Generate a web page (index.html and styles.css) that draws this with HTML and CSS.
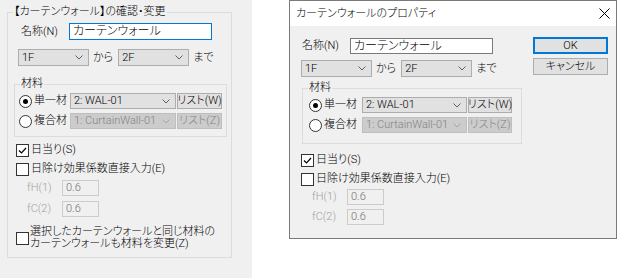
FILE: index.html
```html
<!DOCTYPE html>
<html lang="ja">
<head>
    <meta charset="UTF-8">
    <title>カーテンウォールのプロパティ</title>
    <link rel="stylesheet" href="styles.css">
</head>
<body>
    <div class="panel">
        <fieldset class="group main">
            <legend>【カーテンウォール】の確認・変更</legend>
            <div class="row name-row">
                <span class="lbl">名称(N)</span>
                <div class="edit name focus">カーテンウォール</div>
            </div>
            <div class="row floor-row">
                <div class="combo floor"><span>1F</span><svg class="arrow" width="8" height="5" viewBox="0 0 8 5"><polyline points="0.5,0.5 4,4 7.5,0.5"/></svg></div>
                <span class="word">から</span>
                <div class="combo floor"><span>2F</span><svg class="arrow" width="8" height="5" viewBox="0 0 8 5"><polyline points="0.5,0.5 4,4 7.5,0.5"/></svg></div>
                <span class="word">まで</span>
            </div>
            <fieldset class="group material">
                <legend>材料</legend>
                <div class="row mat-row">
                    <span class="opt"><span class="radio on"></span>単一材</span>
                    <div class="combo mat"><span>2: WAL-01</span><svg class="arrow" width="8" height="5" viewBox="0 0 8 5"><polyline points="0.5,0.5 4,4 7.5,0.5"/></svg></div>
                    <div class="btn list">リスト(W)</div>
                </div>
                <div class="row mat-row second">
                    <span class="opt"><span class="radio"></span>複合材</span>
                    <div class="combo mat off"><span>1: CurtainWall-01</span><svg class="arrow" width="8" height="5" viewBox="0 0 8 5"><polyline points="0.5,0.5 4,4 7.5,0.5"/></svg></div>
                    <div class="btn list off">リスト(Z)</div>
                </div>
            </fieldset>
            <div class="check-row first">
                <span class="check"><svg width="11" height="11" viewBox="0 0 11 11"><polyline points="2,5.5 4.5,8 9,3"/></svg></span>日当り(S)
            </div>
            <div class="check-row">
                <span class="check"></span>日除け効果係数直接入力(E)
            </div>
            <div class="row coef-row">
                <span class="coef-lbl">fH(1)</span>
                <div class="edit coef">0.6</div>
            </div>
            <div class="row coef-row second">
                <span class="coef-lbl">fC(2)</span>
                <div class="edit coef">0.6</div>
            </div>
            <div class="check-row multi">
                <span class="check"></span>
                <span class="multi-text">選択したカーテンウォールと同じ材料の<br>カーテンウォールも材料を変更(Z)</span>
            </div>
        </fieldset>
    </div>

    <div class="dialog">
        <div class="titlebar">
            <span>カーテンウォールのプロパティ</span>
            <svg class="close" width="11" height="11" viewBox="0 0 11 11"><path d="M0.5 0.5 L10.5 10.5 M10.5 0.5 L0.5 10.5"/></svg>
        </div>
        <div class="dlg-body">
            <div class="dlg-form">
                <div class="row name-row">
                    <span class="lbl">名称(N)</span>
                    <div class="edit name">カーテンウォール</div>
                </div>
                <div class="row floor-row">
                    <div class="combo floor"><span>1F</span><svg class="arrow" width="8" height="5" viewBox="0 0 8 5"><polyline points="0.5,0.5 4,4 7.5,0.5"/></svg></div>
                    <span class="word">から</span>
                    <div class="combo floor"><span>2F</span><svg class="arrow" width="8" height="5" viewBox="0 0 8 5"><polyline points="0.5,0.5 4,4 7.5,0.5"/></svg></div>
                    <span class="word">まで</span>
                </div>
                <fieldset class="group material">
                    <legend>材料</legend>
                    <div class="row mat-row">
                        <span class="opt"><span class="radio on"></span>単一材</span>
                        <div class="combo mat"><span>2: WAL-01</span><svg class="arrow" width="8" height="5" viewBox="0 0 8 5"><polyline points="0.5,0.5 4,4 7.5,0.5"/></svg></div>
                        <div class="btn list">リスト(W)</div>
                    </div>
                    <div class="row mat-row second">
                        <span class="opt"><span class="radio"></span>複合材</span>
                        <div class="combo mat off"><span>1: CurtainWall-01</span><svg class="arrow" width="8" height="5" viewBox="0 0 8 5"><polyline points="0.5,0.5 4,4 7.5,0.5"/></svg></div>
                        <div class="btn list off">リスト(Z)</div>
                    </div>
                </fieldset>
                <div class="check-row first">
                    <span class="check"><svg width="11" height="11" viewBox="0 0 11 11"><polyline points="2,5.5 4.5,8 9,3"/></svg></span>日当り(S)
                </div>
                <div class="check-row">
                    <span class="check"></span>日除け効果係数直接入力(E)
                </div>
                <div class="row coef-row">
                    <span class="coef-lbl">fH(1)</span>
                    <div class="edit coef">0.6</div>
                </div>
                <div class="row coef-row second">
                    <span class="coef-lbl">fC(2)</span>
                    <div class="edit coef">0.6</div>
                </div>
            </div>
            <div class="dlg-buttons">
                <div class="btn push default">OK</div>
                <div class="btn push">キャンセル</div>
            </div>
        </div>
    </div>
</body>
</html>
```

FILE: styles.css
```css
* {
    box-sizing: border-box;
}

body {
    margin: 0;
    width: 620px;
    height: 278px;
    overflow: hidden;
    display: flex;
    align-items: flex-start;
    background: #ffffff;
    color: #000000;
    font-family: Roboto, "Noto Sans CJK JP", sans-serif;
    font-size: 11px;
    font-weight: 300;
    line-height: 14px;
    font-feature-settings: "palt";
}

.row {
    display: flex;
    align-items: center;
}

/* left panel */

.panel {
    width: 252px;
    height: 278px;
    background: #f0f0f0;
    padding-left: 7px;
}

.group {
    margin: 0;
    padding: 0;
    min-width: 0;
    border: 1px solid #dcdcdc;
}

.group legend {
    padding: 0 1px;
    margin-left: 5px;
    line-height: 14px;
}

.main {
    margin-top: 5px;
    width: 225px;
    height: 253px;
    padding-top: 4px;
}

.lbl {
    width: 48px;
    margin-left: 13px;
}

.edit {
    border: 1px solid #7a7a7a;
    background: #ffffff;
    padding-left: 3px;
}

.edit.name {
    width: 143px;
    height: 17px;
    font-size: 12px;
    line-height: 15px;
}

.edit.focus {
    border-color: #0078d7;
}

.floor-row {
    margin-top: 9px;
    margin-left: 10px;
}

.combo {
    height: 17px;
    display: flex;
    align-items: center;
    justify-content: space-between;
    padding: 0 5px 0 3px;
    border: 1px solid #adadad;
    background: #e1e1e1;
    white-space: nowrap;
}

.combo.floor {
    width: 71px;
}

.arrow {
    fill: none;
    stroke: #606060;
    stroke-width: 1;
}

.word {
    margin: 0 5px 0 4px;
}

.material {
    margin: 11px 0 0 6px;
    width: 213px;
    padding-bottom: 7px;
}

.mat-row {
    height: 16px;
    margin-top: 2px;
    margin-left: 4px;
}

.mat-row.second {
    margin-top: 4px;
}

.mat-row .combo {
    height: 16px;
}

.opt {
    width: 51px;
    display: flex;
    align-items: center;
    gap: 2px;
}

.radio {
    width: 13px;
    height: 13px;
    border: 1px solid #333333;
    border-radius: 50%;
    background: #ffffff;
    display: flex;
    align-items: center;
    justify-content: center;
}

.radio.on::after {
    content: "";
    width: 5px;
    height: 5px;
    border-radius: 50%;
    background: #000000;
}

.combo.mat {
    width: 106px;
}

.btn {
    display: flex;
    align-items: center;
    justify-content: center;
    border: 1px solid #adadad;
    background: #e1e1e1;
    white-space: nowrap;
}

.btn.list {
    width: 45px;
    height: 16px;
    margin-left: 1px;
}

.combo.off, .btn.off {
    background: #cccccc;
    border-color: #bfbfbf;
    color: #838383;
}

.combo.off .arrow {
    stroke: #a6a6a6;
}

.check-row {
    display: flex;
    align-items: center;
    gap: 2px;
    height: 14px;
    margin-top: 5px;
    margin-left: 8px;
}

.check-row.first {
    margin-top: 6px;
}

.check {
    width: 13px;
    height: 13px;
    border: 1px solid #333333;
    background: #ffffff;
    flex-shrink: 0;
}

.check svg {
    display: block;
    fill: none;
    stroke: #000000;
    stroke-width: 1.2;
}

.coef-row {
    height: 16px;
    margin-top: 4px;
}

.coef-row.second {
    margin-top: 5px;
}

.coef-lbl {
    width: 35px;
    margin-left: 19px;
    color: #a0a0a0;
}

.edit.coef {
    width: 37px;
    height: 16px;
    border-color: #cccccc;
    background: #f0f0f0;
    color: #6d6d6d;
    line-height: 14px;
}

.check-row.multi {
    height: auto;
    gap: 1px;
    margin-top: 9px;
}

.multi-text {
    line-height: 12px;
}

/* dialog */

.dialog {
    margin-left: 37px;
    width: 328px;
    height: 239px;
    border: 1px solid #7a7a7a;
    background: #f0f0f0;
    display: flex;
    flex-direction: column;
}

.titlebar {
    height: 25px;
    flex-shrink: 0;
    background: #ffffff;
    display: flex;
    align-items: center;
    justify-content: space-between;
    padding: 0 6px;
}

.close {
    fill: none;
    stroke: #000000;
    stroke-width: 1;
}

.dlg-body {
    display: flex;
    padding-top: 12px;
}

.dlg-form {
    width: 243px;
}

.dlg-form .lbl {
    margin-left: 12px;
}

.dlg-form .edit.name {
    height: 16px;
    line-height: 14px;
}

.dlg-form .floor-row {
    margin-top: 6px;
    margin-left: 11px;
}

.dlg-form .material {
    margin: 4px 0 0 12px;
    width: 220px;
    padding-bottom: 10px;
}

.dlg-form .mat-row {
    margin-left: 6px;
}

.dlg-form .mat-row.second {
    margin-top: 4px;
}

.dlg-form .opt {
    width: 53px;
}

.dlg-form .combo.mat {
    width: 105px;
}

.dlg-form .btn.list {
    width: 44px;
}

.dlg-form .check-row {
    margin-left: 11px;
}

.dlg-form .check-row.first {
    margin-top: 9px;
}

.dlg-form .coef-row {
    margin-top: 3px;
}

.dlg-form .coef-row.second {
    margin-top: 4px;
}

.dlg-form .coef-lbl {
    margin-left: 22px;
}

.dlg-buttons {
    margin-top: -1px;
    display: flex;
    flex-direction: column;
    gap: 4px;
}

.btn.push {
    width: 75px;
    height: 17px;
}

.btn.default {
    border-color: #0078d7;
    box-shadow: inset 0 0 0 1px #0078d7;
}
```
